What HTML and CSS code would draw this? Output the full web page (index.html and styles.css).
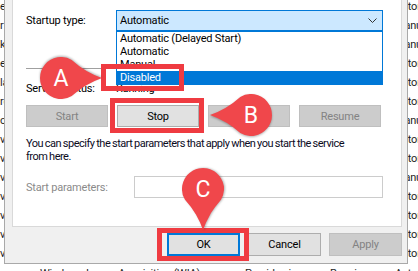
FILE: index.html
```html
<!DOCTYPE html>
<html lang="en">

<head>
  <title>Service Properties</title>
  <meta charset="utf-8">
  <meta name="viewport" content="width=device-width, initial-scale=1">

  <link rel="stylesheet" href="styles.css">
</head>

<body>

  <!-- services list behind the dialog -->
  <div class="services">
    <div class="row"><span>es</span><span></span><span></span><span>Automatic</span></div>
    <div class="row"><span>r</span><span></span><span></span><span>Manual</span></div>
    <div class="row"><span>k</span><span></span><span></span><span>Manual</span></div>
    <div class="row"><span>e</span><span></span><span></span><span>Automatic</span></div>
    <div class="row"><span>la</span><span></span><span></span><span>Automatic</span></div>
    <div class="row"><span>rc</span><span></span><span></span><span>Automatic</span></div>
    <div class="row"><span>o</span><span></span><span></span><span>Manual</span></div>
    <div class="row"><span>v</span><span></span><span></span><span>Automatic</span></div>
    <div class="row"><span>v</span><span></span><span></span><span>Automatic</span></div>
    <div class="row"><span>v</span><span></span><span></span><span>Manual</span></div>
    <div class="row"><span>v</span><span></span><span></span><span>Automatic</span></div>
    <div class="row"><span>v</span><span></span><span></span><span>Automatic</span></div>
    <div class="row"><span>v</span><span></span><span></span><span>Automatic</span></div>
    <div class="row"><span>v</span><span></span><span></span><span>Automatic</span></div>
    <div class="row row-last"><span class="name-wide">Windows Image Acquisition (WIA)</span><span>Provides im...</span><span>Running</span><span>Automatic</span></div>
  </div>

  <div class="dialog">
    <div class="page">

      <div class="field startup">
        <span class="label">Startup type:</span>
        <div class="combo">
          <span>Automatic</span>
          <svg class="chevron" width="9" height="5" viewBox="0 0 9 5">
            <path d="M0.5 0.5 L4.5 4.5 L8.5 0.5" fill="none" stroke="#333" stroke-width="1"/>
          </svg>
          <ul class="combo-list">
            <li>Automatic (Delayed Start)</li>
            <li>Automatic</li>
            <li>Manual</li>
            <li class="selected">Disabled</li>
          </ul>
        </div>
      </div>

      <hr class="sep">

      <div class="field status">
        <span class="label">Service status:</span>
        <span>Running</span>
      </div>

      <div class="svc-buttons">
        <button class="btn" disabled>Start</button>
        <button class="btn">Stop</button>
        <button class="btn" disabled>Pause</button>
        <button class="btn" disabled>Resume</button>
      </div>

      <p class="hint">You can specify the start parameters that apply when you start the service<br>from here.</p>

      <div class="field params">
        <span class="label">Start parameters:</span>
        <input class="text-input" type="text" disabled>
      </div>

    </div>

    <div class="actions">
      <button class="btn btn-default">OK</button>
      <button class="btn">Cancel</button>
      <button class="btn" disabled>Apply</button>
    </div>
  </div>

  <!-- annotations -->
  <div class="mark-box box-a"></div>
  <div class="mark-box box-b"></div>
  <div class="mark-box box-c"></div>

  <svg class="callouts" width="418" height="271" viewBox="0 0 418 271">
    <defs>
      <path id="pin" d="M-41 0 Q-24 -6 -10.75 -18.04 A21 21 0 1 1 -10.75 18.04 Q-24 6 -41 0 Z"/>
    </defs>
    <g transform="translate(61 78)">
      <use href="#pin" transform="rotate(180)" class="pin"/>
      <text class="pin-letter" x="0" y="8">A</text>
    </g>
    <g transform="translate(251 115)">
      <use href="#pin" class="pin"/>
      <text class="pin-letter" x="0" y="8">B</text>
    </g>
    <g transform="translate(203 189)">
      <use href="#pin" transform="rotate(-90)" class="pin"/>
      <text class="pin-letter" x="0" y="8">C</text>
    </g>
  </svg>

</body>

</html>
```

FILE: styles.css
```css
    * {
      box-sizing: border-box;
    }

    body {
      margin: 0;
      width: 418px;
      height: 271px;
      overflow: hidden;
      position: relative;
      background: #ffffff;
      font-family: "Segoe UI", Roboto, sans-serif;
      font-size: 11px;
      letter-spacing: -0.2px;
      color: #000000;
    }

    /* list in the background */
    .services {
      margin-top: -3px;
    }

    .row {
      display: grid;
      grid-template-columns: 245px 85px 65px 1fr;
      height: 19px;
      line-height: 19px;
      white-space: nowrap;
      color: #1e1e1e;
    }

    .row span {
      overflow: hidden;
    }

    .row-last {
      padding-top: 1px;
    }

    .row .name-wide {
      padding-left: 40px;
    }

    /* dialog window */
    .dialog {
      position: absolute;
      left: 4px;
      top: -9px;
      width: 404px;
      padding: 7px 5px 7px 7px;
      background: #f0f0f0;
      border: 1px solid #a9a9a9;
    }

    .page {
      background: #ffffff;
      border: 1px solid #d9d9d9;
      padding: 10px 18px 28px 13px;
    }

    .field {
      display: flex;
      align-items: center;
    }

    .startup {
      height: 21px;
    }

    .startup .label,
    .status .label {
      width: 90px;
      flex-shrink: 0;
    }

    .combo {
      position: relative;
      flex: 1;
      height: 21px;
      display: flex;
      align-items: center;
      justify-content: space-between;
      padding: 0 5px 0 3px;
      background: #cce8ff;
      border: 1px solid #0078d7;
    }

    .combo-list {
      position: absolute;
      left: -1px;
      right: -1px;
      top: calc(100% + 1px);
      margin: 0;
      padding: 0;
      list-style: none;
      background: #ffffff;
      border: 1px solid #0078d7;
    }

    .combo-list li {
      height: 13px;
      line-height: 13px;
      padding-left: 3px;
      white-space: nowrap;
    }

    .combo-list .selected {
      background: #0078d7;
      color: #ffffff;
    }

    .sep {
      margin: 37px 0 0;
      border: 0;
      border-top: 1px solid #a0a0a0;
    }

    .status {
      margin-top: 13px;
      line-height: 13px;
    }

    .svc-buttons {
      display: flex;
      gap: 9px;
      margin-top: 10px;
    }

    .btn {
      font: inherit;
      letter-spacing: inherit;
      width: 82px;
      height: 22px;
      padding: 0;
      color: #000000;
      background: #e1e1e1;
      border: 1px solid #adadad;
    }

    .btn:disabled {
      color: #838383;
      background: #cccccc;
      border-color: #bfbfbf;
    }

    .hint {
      margin: 10px 0 0;
      line-height: 13px;
      white-space: nowrap;
      letter-spacing: -0.5px;
      word-spacing: -0.5px;
      color: #0c0c1e;
    }

    .params {
      margin-top: 13px;
    }

    .params .label {
      width: 108px;
      flex-shrink: 0;
      color: #8a8a8a;
    }

    .text-input {
      flex: 1;
      height: 22px;
      border: 1px solid #cccccc;
      background: #ffffff;
    }

    .actions {
      display: flex;
      justify-content: flex-end;
      gap: 8px;
      margin-top: 6px;
    }

    .actions .btn {
      width: 73px;
      height: 23px;
    }

    .btn-default {
      border: 2px solid #0078d7;
    }

    /* red annotation frames and pins */
    .mark-box {
      position: absolute;
      border: 5px solid #ef3b41;
    }

    .box-a {
      left: 101px;
      top: 64px;
      width: 83px;
      height: 27px;
    }

    .box-b {
      left: 110px;
      top: 98px;
      width: 94px;
      height: 35px;
    }

    .box-c {
      left: 157px;
      top: 228px;
      width: 92px;
      height: 33px;
    }

    .callouts {
      position: absolute;
      left: 0;
      top: 0;
    }

    .pin {
      fill: #f0474b;
      filter: drop-shadow(0 1px 1px rgba(0, 0, 0, 0.3));
    }

    .pin-letter {
      fill: #ffffff;
      font-family: "Segoe UI", Roboto, sans-serif;
      font-size: 23px;
      letter-spacing: 0;
      text-anchor: middle;
    }
```
